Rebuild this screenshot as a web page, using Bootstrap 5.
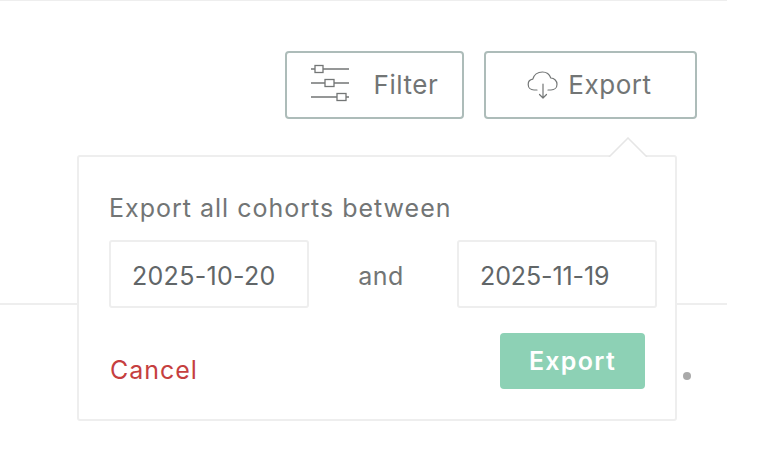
<!DOCTYPE html>
<html lang="en">
<head>
<meta charset="utf-8">
<title>Export</title>
<link href="https://cdn.jsdelivr.net/npm/bootstrap@5.3.0/dist/css/bootstrap.min.css" rel="stylesheet">
<style>
html,body{height:452px;overflow:hidden;background:#fff}
body{font-family:"Inter","Liberation Sans",sans-serif;color:#727575}
.page-wrap{width:727px;height:452px;position:relative;border-top:1px solid #eeeeee}
.toolbar{height:304px;padding:50px 30px 0 0;border-bottom:2px solid #eeeeee;gap:20px}
.tool-btn{height:68px;background:#fff;border:2px solid #adbcb9;border-radius:4px;color:#727575;font-size:26px;line-height:1;padding:0;letter-spacing:.55px}
.tool-filter{width:179px;gap:25px}
.tool-export{width:213px;gap:10px;padding-right:2px}
.icon-filter{margin-bottom:4px}
.export-pop{position:absolute;left:77px;top:154px;width:600px;height:266px;background:#fff;border:2px solid #eeeeee;border-radius:3px;padding:35px 18px 0 30px}
.pop-arrow{position:absolute;left:529px;top:-20px;width:40px;height:20px;display:block}
.pop-title{font-size:25px;line-height:32px;letter-spacing:1px;margin-bottom:16px}
.date-box{width:200px;height:68px;border:2px solid #eeeeee;border-radius:3px;padding:4px 0 0 21px;font-size:25px;letter-spacing:.3px;color:#616668;box-shadow:none}
.date-end{letter-spacing:-.1px}
.date-and{font-size:25px;width:148px;text-align:center;padding-top:6px;padding-right:4px;letter-spacing:.5px}
.pop-actions{padding:24px 12px 0 1px}
.cancel-link{color:#c63f3f;font-size:25px;text-decoration:none;letter-spacing:.95px;margin-top:20px}
.go-btn{width:145px;height:56px;background:#8dd1b5;border:0;border-radius:4px;color:#fff;font-weight:600;font-size:25px;letter-spacing:1.3px;padding:2px 0 0}
.row-dot{position:absolute;left:683px;top:371px;width:8px;height:8px;border-radius:50%;background:#a9a9a9}
</style>
</head>
<body>
<div class="page-wrap">
  <div class="toolbar d-flex justify-content-end align-items-start">
    <button type="button" class="btn tool-btn tool-filter d-flex align-items-center justify-content-center">
      <svg class="icon-filter" width="38" height="38" viewBox="0 0 38 38" fill="none" stroke="#737676" stroke-width="1.3"><path d="M0 5H4M12 5H38M0 19H14M23 19H38M0 33H26M35 33H38"/><rect x="4" y="1.500" width="8" height="7" fill="#fff"/><rect x="14" y="15.500" width="9" height="7" fill="#fff"/><rect x="26" y="29.500" width="9" height="7" fill="#fff"/></svg>
      <span>Filter</span>
    </button>
    <button type="button" class="btn tool-btn tool-export d-flex align-items-center justify-content-center">
      <svg width="31" height="28" viewBox="0 0 31 28" fill="none" stroke="#737676" stroke-width="1.2" stroke-linecap="round" stroke-linejoin="round"><path d="M10 19H7C3.500 19 1.200 16.500 1.200 13.500C1.200 10.800 3 8.600 5.800 8.200C6.800 4 10.600 1 15.500 1C19.600 1 22.600 3.600 23.800 7C27.400 7.200 30 10 30 13.200C30 16.600 27.400 19 24 19H21"/><path d="M16 13V27M12.500 23.500L16 27L19.500 23.500"/></svg>
      <span>Export</span>
    </button>
  </div>
  <div class="row-dot"></div>
  <div class="export-pop">
    <svg class="pop-arrow" viewBox="0 0 40 20" fill="#fff" stroke="#e6e6e6" stroke-width="1.500"><path d="M1 20L20 1L39 20"/></svg>
    <div class="pop-title">Export all cohorts between</div>
    <div class="d-flex align-items-center">
      <input class="form-control date-box" type="text" value="2025-10-20" aria-label="Start date">
      <span class="date-and">and</span>
      <input class="form-control date-box date-end" type="text" value="2025-11-19" aria-label="End date">
    </div>
    <div class="pop-actions d-flex justify-content-between align-items-center">
      <a href="#" class="cancel-link">Cancel</a>
      <button type="button" class="btn go-btn">Export</button>
    </div>
  </div>
</div>
</body>
</html>
